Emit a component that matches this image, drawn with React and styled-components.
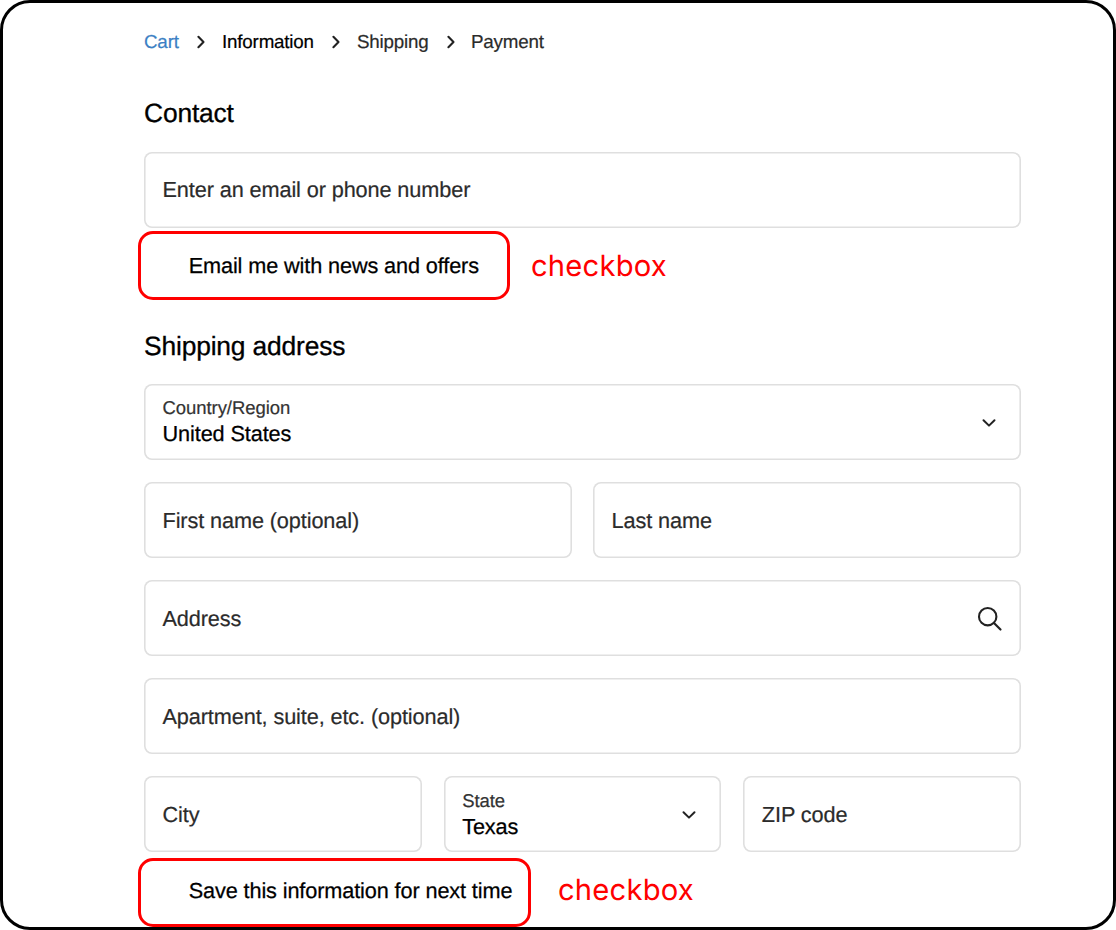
import React from "react";
import styled, { createGlobalStyle } from "styled-components";

const GlobalStyle = createGlobalStyle`
  *, *::before, *::after { box-sizing: border-box; }
  body {
    margin: 0;
    background: #fff;
    font-family: "Liberation Sans", Arial, Helvetica, sans-serif;
    text-rendering: geometricPrecision;
  }
`;

const Frame = styled.main`
  width: 1116px;
  height: 930px;
  padding: 25px 92px 0 141px;
  border: 3px solid #000;
  border-radius: 30px;
  background: #fff;
  overflow: hidden;
`;

const Breadcrumb = styled.nav`
  display: flex;
  align-items: center;
  height: 28px;
`;

const Crumb = styled.span`
  width: ${(p) => p.$width}px;
  white-space: nowrap;
  font-size: 18.8px;
  letter-spacing: -0.19px;
  line-height: 28px;
  color: ${(p) => p.$color};
  -webkit-text-stroke: 0.2px;
`;

const CrumbChevron = styled.svg`
  flex: none;
  width: 9px;
  height: 14px;
  margin: 0 ${(p) => p.$after}px 0 ${(p) => p.$before}px;
`;

const Heading = styled.h2`
  margin: ${(p) => p.$top}px 0 0;
  height: 38px;
  font-size: 26.4px;
  letter-spacing: -0.17px;
  font-weight: 400;
  line-height: 38px;
  color: #000;
  -webkit-text-stroke: 0.3px;
`;

const Fields = styled.div`
  display: flex;
  flex-direction: column;
  gap: 22px;
  margin-top: ${(p) => p.$top}px;
`;

const Row = styled.div`
  display: grid;
  grid-template-columns: repeat(${(p) => p.$columns}, 1fr);
  gap: ${(p) => p.$gap}px;
`;

const Field = styled.div`
  display: flex;
  align-items: center;
  justify-content: space-between;
  height: 76px;
  padding: ${(p) => (p.$lowered ? 2 : 0)}px 18.5px 0;
  border-radius: 8px;
  box-shadow: inset 0 0 0 1.6px #dfdfdf;
`;

const Placeholder = styled.span`
  font-size: 21.7px;
  letter-spacing: -0.11px;
  line-height: 30px;
  color: #2b2b2b;
  -webkit-text-stroke: 0.2px;
`;

const Selected = styled.div`
  display: flex;
  flex-direction: column;
`;

const SelectLabel = styled.span`
  font-size: 18.5px;
  letter-spacing: -0.06px;
  line-height: 24px;
  color: #333;
  -webkit-text-stroke: 0.2px;
`;

const SelectValue = styled.span`
  font-size: 21.7px;
  letter-spacing: -0.11px;
  line-height: 28px;
  color: #000;
  -webkit-text-stroke: 0.25px;
`;

const SelectChevron = styled.svg`
  width: 16px;
  height: 10px;
  margin: ${(p) => (p.$lowered ? 0 : 2)}px 5.5px 0 0;
`;

const SearchIcon = styled.svg`
  width: 26px;
  height: 26px;
`;

const CheckRow = styled.div`
  display: flex;
  align-items: flex-start;
  margin: ${(p) => p.$top}px 0 0 -6px;
`;

const CheckOutline = styled.div`
  width: ${(p) => p.$width}px;
  height: 69px;
  padding-left: 47.7px;
  border: 3px solid #f00;
  border-radius: 15px;
  font-size: 21.7px;
  letter-spacing: -0.12px;
  line-height: ${(p) => p.$line}px;
  white-space: nowrap;
  color: #000;
  -webkit-text-stroke: 0.25px;
`;

const Note = styled.span`
  margin: ${(p) => p.$top}px 0 0 ${(p) => p.$left}px;
  font-family: Inter, sans-serif;
  font-size: 29.2px;
  font-optical-sizing: none;
  letter-spacing: 0.2px;
  line-height: 40px;
  color: #f00;
`;

const Separator = ({ before, after }) => (
  <CrumbChevron $before={before} $after={after} viewBox="0 0 9 14" fill="none">
    <path d="M2.4 1.8 7.5 7 2.4 12.2" stroke="#222" strokeWidth="2.1" strokeLinecap="round" strokeLinejoin="round" />
  </CrumbChevron>
);

const TextField = ({ label, lowered, children }) => (
  <Field $lowered={lowered}>
    <Placeholder>{label}</Placeholder>
    {children}
  </Field>
);

const SelectField = ({ label, value, lowered }) => (
  <Field $lowered={lowered}>
    <Selected>
      <SelectLabel>{label}</SelectLabel>
      <SelectValue>{value}</SelectValue>
    </Selected>
    <SelectChevron $lowered={lowered} viewBox="0 0 16 10" fill="none">
      <path d="M2.5 2.2 8 7.6 13.5 2.2" stroke="#222" strokeWidth="2" strokeLinecap="round" strokeLinejoin="round" />
    </SelectChevron>
  </Field>
);

export default function App() {
  return (
    <>
      <GlobalStyle />
      <Frame>
        <Breadcrumb>
          <Crumb $width={35} $color="#3b7fc4">Cart</Crumb>
          <Separator before={17} after={17} />
          <Crumb $width={92} $color="#000">Information</Crumb>
          <Separator before={17} after={17} />
          <Crumb $width={72} $color="#2b2b2b">Shipping</Crumb>
          <Separator before={17} after={16} />
          <Crumb $width={73} $color="#2b2b2b">Payment</Crumb>
        </Breadcrumb>

        <Heading $top={38}>Contact</Heading>
        <Fields $top={20}>
          <TextField label="Enter an email or phone number" />
        </Fields>
        <CheckRow $top={3}>
          <CheckOutline $width={372} $line={64}>Email me with news and offers</CheckOutline>
          <Note $top={16} $left={21}>checkbox</Note>
        </CheckRow>

        <Heading $top={27}>Shipping address</Heading>
        <Fields $top={19}>
          <SelectField label="Country/Region" value="United States" />
          <Row $columns={2} $gap={21.2}>
            <TextField lowered label="First name (optional)" />
            <TextField lowered label="Last name" />
          </Row>
          <TextField lowered label="Address">
            <SearchIcon viewBox="0 0 26 26" fill="none">
              <circle cx="10.7" cy="10.7" r="8.7" stroke="#222" strokeWidth="2.1" />
              <path d="M17 17 23.5 23.5" stroke="#222" strokeWidth="2.2" strokeLinecap="round" />
            </SearchIcon>
          </TextField>
          <TextField lowered label="Apartment, suite, etc. (optional)" />
          <Row $columns={3} $gap={22}>
            <TextField lowered label="City" />
            <SelectField lowered label="State" value="Texas" />
            <TextField lowered label="ZIP code" />
          </Row>
        </Fields>
        <CheckRow $top={6}>
          <CheckOutline $width={393} $line={60}>Save this information for next time</CheckOutline>
          <Note $top={13} $left={27}>checkbox</Note>
        </CheckRow>
      </Frame>
    </>
  );
}
